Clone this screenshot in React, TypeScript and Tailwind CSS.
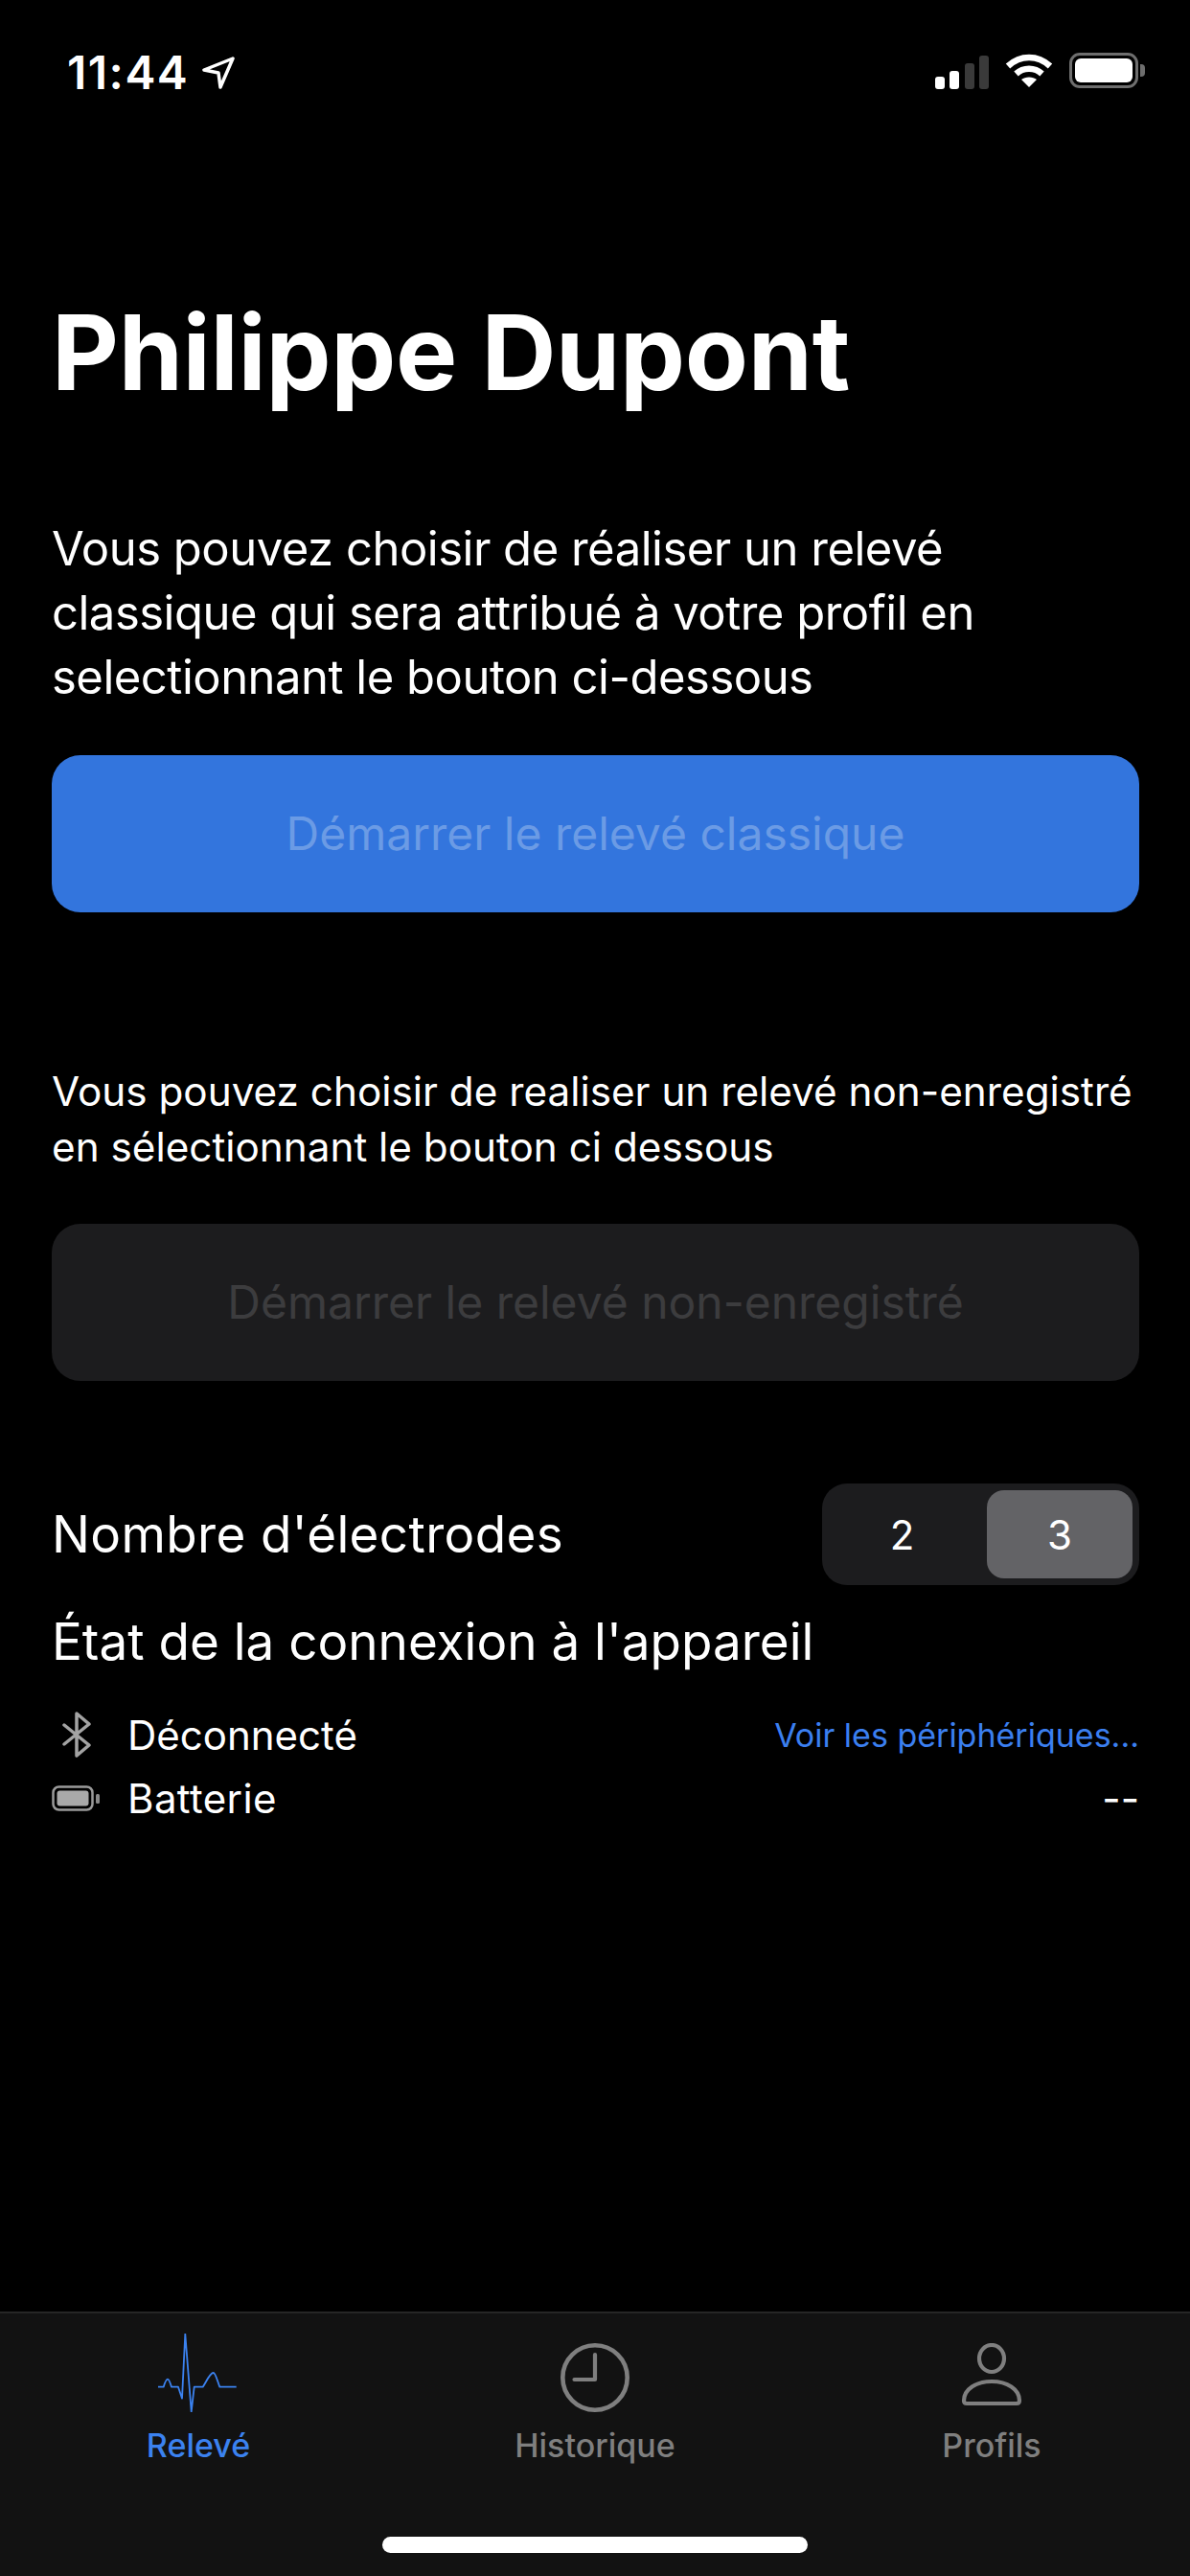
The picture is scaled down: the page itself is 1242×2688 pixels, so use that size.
import React from 'react';

const font = "font-['Inter','Liberation_Sans',sans-serif]";

function StatusBar() {
  return (
    <div className="h-[132px] flex justify-between pl-[70px] pr-[47px] pt-[56px] shrink-0">
      <div className="flex items-start">
        <span className="text-[48px] leading-[40px] font-semibold text-white tracking-[1.5px]">11:44</span>
        {/* location arrow */}
        <svg className="ml-[14px] mt-[3px]" width="34" height="34" viewBox="0 0 34 34" fill="none">
          <path d="M32 2 L2 14 L17 17 L19 32 Z" stroke="white" strokeWidth="3.5" strokeLinejoin="round" />
        </svg>
      </div>
      <div className="flex items-start gap-[17px]">
        <div className="flex items-end gap-[5.5px] h-[36px] mt-[1px]">
          <div className="w-[10px] h-[13px] rounded-[3px] bg-white" />
          <div className="w-[10px] h-[19px] rounded-[3px] bg-white" />
          <div className="w-[10px] h-[27px] rounded-[3px] bg-[#3a3a3a]" />
          <div className="w-[10px] h-[35px] rounded-[3px] bg-[#3a3a3a]" />
        </div>
        {/* wifi */}
        <svg width="50" height="36" viewBox="0 0 50 36" fill="none">
          <path d="M3 13 C16 1 34 1 47 13" stroke="white" strokeWidth="6.5" />
          <path d="M11.5 21 C19 14 31 14 38.5 21" stroke="white" strokeWidth="6.5" />
          <path d="M25 35 L17 27 C21 23.5 29 23.5 33 27 Z" fill="white" />
        </svg>
        <div className="flex items-center">
          <div className="w-[72px] h-[37px] rounded-[11px] border-[3px] border-[#6e6e6e] p-[3px] -mt-[1px]">
            <div className="w-full h-full rounded-[6px] bg-white" />
          </div>
          <div className="w-[5px] h-[13px] rounded-r-[4px] bg-[#6e6e6e] ml-[2px] -mt-[1px]" />
        </div>
      </div>
    </div>
  );
}

function ActionButton({ label, className }: { label: string; className: string }) {
  return (
    <div className={`h-[164px] rounded-[30px] flex items-center justify-center text-[48px] ${className}`}>
      {label}
    </div>
  );
}

function BluetoothIcon() {
  return (
    <svg width="30" height="50" viewBox="0 0 30 50" fill="none">
      <path d="M2 15 L28 36 L15 47 L15 3 L28 14 L2 35" stroke="#a3a3a3" strokeWidth="3.5" strokeLinejoin="round" strokeLinecap="round" />
    </svg>
  );
}

function BatteryIcon() {
  return (
    <svg width="50" height="27" viewBox="0 0 50 27" fill="none">
      <rect x="1.5" y="1.5" width="41" height="24" rx="6" stroke="#9a9a9a" strokeWidth="2.5" />
      <rect x="5.5" y="5.5" width="33" height="16" rx="3" fill="#a9a9a9" />
      <rect x="46" y="9" width="4" height="10" rx="1.5" fill="#8a8a8a" />
    </svg>
  );
}

function EcgIcon() {
  return (
    <svg width="84" height="82" viewBox="0 0 84 82" fill="none">
      <path
        d="M0 55.7 L5.7 55.7 C7.5 50 8.5 47.7 10 47.7 C11.5 47.7 12.5 51 14 55.7 L21 55.7 L25 67.7 L28.3 0.5 L34.7 81.7 L37.7 55.7 L46.7 55.7 C50 51 54 41 57.7 41 C60 41 62 50 64.3 55.7 L81.7 55.7"
        stroke="#3b82f0"
        strokeWidth="1.8"
        strokeLinejoin="round"
      />
    </svg>
  );
}

function ClockIcon() {
  return (
    <svg width="72" height="72" viewBox="0 0 72 72" fill="none">
      <circle cx="36" cy="36" r="33.7" stroke="#7f7f7f" strokeWidth="4.6" />
      <path d="M36 12 L36 38 L14.5 38" stroke="#7f7f7f" strokeWidth="4.2" strokeLinecap="round" strokeLinejoin="round" />
    </svg>
  );
}

function PersonIcon() {
  return (
    <svg width="64" height="72" viewBox="0 0 64 72" fill="none">
      <ellipse cx="32" cy="16" rx="13" ry="14" stroke="#7f7f7f" strokeWidth="4.2" />
      <path
        d="M3 60 C3 48 16 40 32 40 C48 40 61 48 61 60 C61 62 60 63 58 63 L6 63 C4 63 3 62 3 60 Z"
        stroke="#7f7f7f"
        strokeWidth="4.2"
        strokeLinejoin="round"
      />
    </svg>
  );
}

function TabItem({ icon, label, active }: { icon: React.ReactNode; label: string; active?: boolean }) {
  return (
    <div className="flex-1 flex flex-col items-center">
      <div className="h-[103px] w-full flex items-end justify-center">{icon}</div>
      <span className={`mt-[15px] text-[34px] leading-[40px] font-medium ${active ? 'text-[#3b82f0]' : 'text-[#7f7f7f]'}`}>
        {label}
      </span>
    </div>
  );
}

export default function App() {
  return (
    <div className={`w-[1242px] h-[2688px] bg-black text-white flex flex-col ${font}`}>
      <StatusBar />

      <main className="flex-1 pl-[54px] pr-[53px]">
        <h1 className="mt-[175px] text-[108px] leading-[122px] font-bold tracking-[-0.3px]">Philippe Dupont</h1>

        <p className="mt-[110px] text-[49px] leading-[67px] tracking-[-0.5px]">
          Vous pouvez choisir de réaliser un relevé
          <br />
          classique qui sera attribué à votre profil en
          <br />
          selectionnant le bouton ci-dessous
        </p>
        <ActionButton label="Démarrer le relevé classique" className="mt-[48px] bg-[#3375dd] text-[#6b9be5]" />

        <p className="mt-[158px] text-[42.25px] leading-[58px]">
          Vous pouvez choisir de realiser un relevé non-enregistré
          <br />
          en sélectionnant le bouton ci dessous
        </p>
        <ActionButton label="Démarrer le relevé non-enregistré" className="mt-[51px] bg-[#1c1c1e] text-[#3c3c3e]" />

        <div className="mt-[107px] flex items-center justify-between">
          <span className="text-[53px] leading-[60px] tracking-[0.35px]">Nombre d'électrodes</span>
          <div className="w-[331px] h-[106px] rounded-[26px] bg-[#1c1c1e] flex items-center p-[7px]">
            <div className="flex-1 flex items-center justify-center text-[42px] pr-[12px]">2</div>
            <div className="w-[152px] h-full rounded-[18px] bg-[#636366] flex items-center justify-center text-[42px]">3</div>
          </div>
        </div>

        <div className="mt-[29px] text-[53px] leading-[60px]">État de la connexion à l'appareil</div>

        <div className="mt-[37px] flex items-center justify-between h-[60px]">
          <div className="flex items-center">
            <div className="w-[79px] pl-[11px] flex items-center"><BluetoothIcon /></div>
            <span className="text-[42px]">Déconnecté</span>
          </div>
          <span className="text-[34px] text-[#3b7ff0]">Voir les périphériques...</span>
        </div>
        <div className="mt-[6px] flex items-center justify-between h-[60px]">
          <div className="flex items-center">
            <div className="w-[79px] flex items-center"><BatteryIcon /></div>
            <span className="text-[42px] tracking-[0.4px]">Batterie</span>
          </div>
          <span className="text-[42px]">--</span>
        </div>
      </main>

      <nav className="h-[276px] bg-[#121212] border-t-2 border-[#262626] flex flex-col shrink-0">
        <div className="flex h-[233px]">
          <TabItem icon={<EcgIcon />} label="Relevé" active />
          <TabItem icon={<ClockIcon />} label="Historique" />
          <TabItem icon={<PersonIcon />} label="Profils" />
        </div>
        <div className="w-[444px] h-[17px] rounded-full bg-white self-center" />
      </nav>
    </div>
  );
}
